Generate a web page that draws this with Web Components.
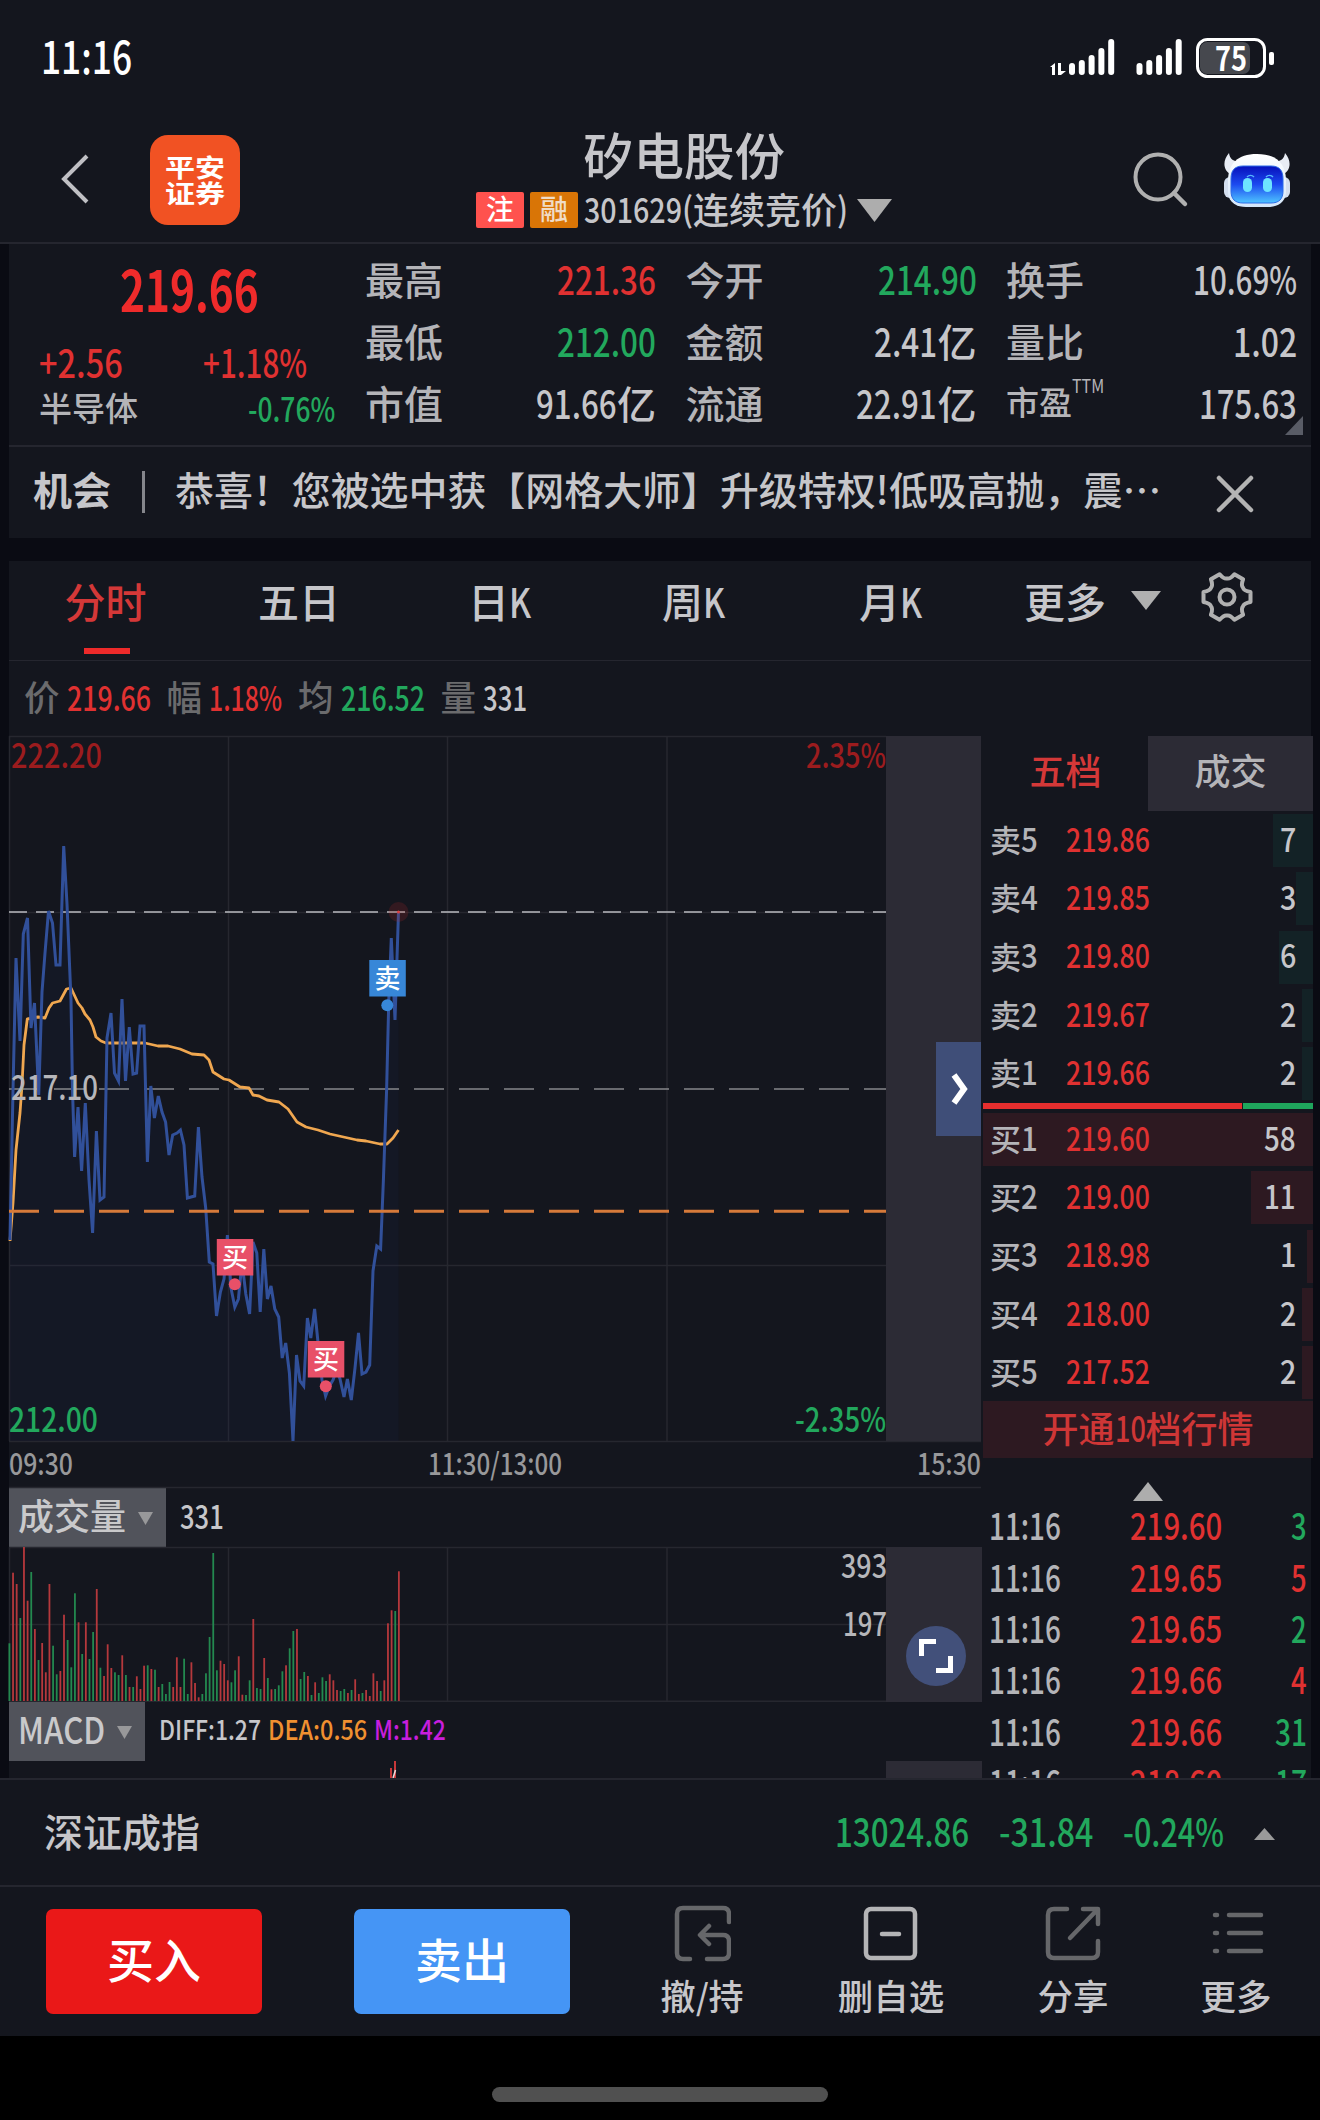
<!DOCTYPE html>
<html lang="zh-CN">
<head>
<meta charset="UTF-8">
<title>矽电股份 301629</title>
<style>
  body {
    margin: 0;
    background: #0a0b13;
    color: #c6c6ca;
    font-family: "Noto Sans CJK SC", sans-serif;
    font-weight: 500;
    --red: #e03131;
    --green: #22a85d;
    --panel: #14161e;
    --line: #25262f;
    --muted: #b4b4b8;
  }
</style>
</head>
<body>
<stock-page></stock-page>

<script>
// Inline text with narrow figures: w is the final width in px, --size the font size
class FitText extends HTMLElement {
  connectedCallback() {
    if (!this.shadowRoot) {
      this.attachShadow({ mode: 'open' });
      this.shadowRoot.innerHTML = `
        <style>
          :host { display: inline-block; flex: none; white-space: nowrap; font-size: var(--size); line-height: var(--lh, 1.2); }
          span { display: inline-block; transform-origin: 0 50%; transform: translateY(-.06em); }
        </style>
        <span><slot></slot></span>
      `;
    }
    const w = Number(this.getAttribute('w'));
    if (!w) return;
    const span = this.shadowRoot.querySelector('span');
    const natural = span.offsetWidth;
    this.style.width = w + 'px';
    if (natural) span.style.transform = `translateY(-.06em) scaleX(${w / natural})`;
  }
}
customElements.define('fit-text', FitText);

const t = (text, size, w = '', css = '') =>
  `<fit-text w="${w}" style="--size:${size}px;${css}">${text}</fit-text>`;
const RED = 'color:var(--red);';
const GREEN = 'color:var(--green);';

class StatusBar extends HTMLElement {
  connectedCallback() {
    const bars = x => [64, 61, 56, 49, 40].map((y, i) =>
      `<rect x="${x + i * 9.8}" y="${y}" width="6" height="${76 - y}" rx="3"/>`).join('');
    this.attachShadow({ mode: 'open' });
    this.shadowRoot.innerHTML = `
      <style>
        :host { display: flex; justify-content: space-between; align-items: center; height: 116px; padding: 0 44px 0 41px; color: #fff; background: var(--panel); }
        svg { display: block; font-family: inherit; }
      </style>
      ${t('11:16', 45, 91, 'font-weight:500')}
      <svg width="228" height="50" viewBox="1048 34 228 50" fill="#fff">
        <path d="M1050 68l5-4v12h-3v-8zM1058 64h3v8h5l-5 4h-3z"/>
        ${bars(1069)}${bars(1136.5)}
        <rect x="1200" y="43" width="50" height="32" rx="7" fill="#46484e"/>
        <rect x="1197.5" y="40.5" width="67" height="37" rx="10" fill="none" stroke="#fff" stroke-width="3"/>
        <rect x="1269" y="53" width="5" height="13" rx="2"/>
        <text x="1215" y="72" font-size="34" font-weight="700" textLength="32" lengthAdjust="spacingAndGlyphs">75</text>
      </svg>
    `;
  }
}
customElements.define('status-bar', StatusBar);

class StockHeader extends HTMLElement {
  connectedCallback() {
    this.attachShadow({ mode: 'open' });
    this.shadowRoot.innerHTML = `
      <style>
        :host { display: grid; grid-template-columns: 476px 1fr 187px; height: 126px; background: var(--panel); border-bottom: 2px solid var(--line); }
        .left, .right { display: flex; align-items: flex-start; }
        svg { display: block; }
        .back { margin: 38px 0 0 60px; }
        .logo { --lh: 26px; box-sizing: border-box; width: 90px; height: 90px; margin: 19px 0 0 60px; padding-top: 20px; border-radius: 18px; background: #f15223; color: #fff; display: flex; flex-direction: column; align-items: center; font-weight: 700; }
        .name { --lh: 1; display: flex; padding: 15px 0 0 107px; height: 52px; }
        .sub { --lh: 1; display: flex; align-items: center; height: 36px; margin-top: 9px; }
        .tag { display: flex; align-items: center; justify-content: center; width: 48px; height: 36px; border-radius: 2px; background: #ff524e; color: #fff; margin-right: 6px; }
        .tag.margin { background: #d97506; color: #f0dcc6; }
        .caret { margin: 0 0 0 9px; }
        .search { margin: 36px 0 0 0; }
        .bot { margin: 37px 0 0 34px; }
      </style>
      <div class="left">
        <svg class="back" width="30" height="50" viewBox="0 0 30 50" fill="none" stroke="#c0c0c4" stroke-width="4"><path d="M27 2L4 25l23 23"/></svg>
        <div class="logo">${t('平安', 25.5, 60)}${t('证券', 25.5, 60)}</div>
      </div>
      <div>
        <div class="name">${t('矽电股份', 50.5)}</div>
        <div class="sub">
          <span class="tag">${t('注', 28)}</span><span class="tag margin">${t('融', 28)}</span>
          ${t('301629', 34.5, 98)}${t('(', 34, 11)}${t('连续竞价', 36)}${t(')', 34, 11)}
          <svg class="caret" width="35" height="23"><path d="M0 0h35L17.5 23z" fill="#adadad"/></svg>
        </div>
      </div>
      <div class="right">
        <svg class="search" width="57" height="56" viewBox="1133 152 57 56" fill="none" stroke="#b0b0b0" stroke-width="4"><circle cx="1158" cy="177" r="22.5"/><path d="M1174 193l11 11" stroke-width="4.5" stroke-linecap="round"/></svg>
        <svg class="bot" width="68" height="56" viewBox="1 1 68 56">
          <defs>
            <linearGradient id="face" x1="0" y1="0" x2="0" y2="1"><stop offset="0" stop-color="#0610ba"/><stop offset=".5" stop-color="#1c4af0"/><stop offset="1" stop-color="#4ec4ff"/></linearGradient>
            <linearGradient id="shell" x1="0" y1="0" x2="0" y2="1"><stop offset="0" stop-color="#fff"/><stop offset="1" stop-color="#d4e6fa"/></linearGradient>
          </defs>
          <path d="M6 1C-1 9 0 19 9 23L21 9C12 11 7 8 6 1zM62 1c7 8 6 18-3 22L47 9c9 2 14-1 15-8z" fill="#e8ecf4"/>
          <rect x="1" y="25" width="12" height="21" rx="6" fill="#d3deef"/><rect x="55" y="25" width="12" height="21" rx="6" fill="#d3deef"/>
          <path d="M34 2c20 0 28 10 29 25v14c-1 10-9 14-18 14H23C14 55 6 51 5 41V27C6 12 14 2 34 2z" fill="url(#shell)"/>
          <path d="M20 14h28c9 0 12 5 12 13v12c0 8-4 12-12 12H20c-8 0-12-4-12-12V27c0-8 3-13 12-13z" fill="url(#face)" stroke="#2a6be8"/>
          <rect x="20" y="26" width="9" height="14" rx="4.5" fill="#6de4ff"/><rect x="40" y="26" width="9" height="14" rx="4.5" fill="#6de4ff"/>
          <path d="M24 25c2-2 5-2 7 0M43 25c2-2 5-2 7 0" fill="none" stroke="#55b8ff" stroke-width="1.5"/>
        </svg>
      </div>
    `;
  }
}
customElements.define('stock-header', StockHeader);

class QuotePanel extends HTMLElement {
  connectedCallback() {
    const yi = (num, w) => t(num, 39, w) + t('亿', 39);
    const rows = [
      ['最高', t('221.36', 39, 99, RED)], ['今开', t('214.90', 39, 99, GREEN)], ['换手', t('10.69%', 39, 104)],
      ['最低', t('212.00', 39, 99, GREEN)], ['金额', yi('2.41', 63)], ['量比', t('1.02', 39, 64)],
      ['市值', yi('91.66', 81)], ['流通', yi('22.91', 81)], ['', t('175.63', 39, 98)]
    ];
    this.attachShadow({ mode: 'open' });
    this.shadowRoot.innerHTML = `
      <style>
        :host { position: relative; display: grid; grid-template-columns: 356px 1fr; height: 201px; background: var(--panel); border-bottom: 2px solid var(--line); }
        .main { display: grid; grid-template-rows: 92px 54px 40px; }
        .main > div { display: flex; align-items: center; }
        .price { justify-content: center; padding-left: 5px; }
        .change { padding-left: 30px; gap: 80px; }
        .sector { padding: 0 30px 0 30px; justify-content: space-between; color: var(--muted); }
        .stats { display: grid; grid-template-columns: repeat(3, 291px); grid-template-rows: repeat(3, 62px); column-gap: 29.5px; padding-top: 5px; }
        .cell { display: flex; align-items: center; justify-content: space-between; }
        .cell b { font-weight: inherit; display: flex; color: var(--muted); }
        .cell i { font-style: normal; display: flex; }
        .ttm { margin-top: -9px; font-weight: 400; }
        .corner { position: absolute; right: 8px; bottom: 10px; }
      </style>
      <div class="main">
        <div class="price">${t('219.66', 57, 139, 'color:#ef2b2b;font-weight:700')}</div>
        <div class="change">${t('+2.56', 39, 84, RED)}${t('+1.18%', 39, 104, RED)}</div>
        <div class="sector">${t('半导体', 33)}${t('-0.76%', 34, 87, GREEN)}</div>
      </div>
      <div class="stats">
        ${rows.map(([label, value]) => `
          <div class="cell"><b>${label ? t(label, 39) : t('市盈', 33) + `<span class="ttm">${t('TTM', 19, 32)}</span>`}</b><i>${value}</i></div>`).join('')}
      </div>
      <svg class="corner" width="18" height="19"><path d="M18 0v19H0z" fill="#595c66"/></svg>
    `;
  }
}
customElements.define('quote-panel', QuotePanel);

class NoticeBar extends HTMLElement {
  connectedCallback() {
    this.attachShadow({ mode: 'open' });
    this.shadowRoot.innerHTML = `
      <style>
        :host { display: flex; align-items: center; box-sizing: border-box; height: 91px; padding: 0 0 5px 24px; background: var(--panel); }
        i { width: 3px; height: 42px; margin: 3px 30px 0 31px; background: #85868c; }
        svg { margin: 7px 0 0 55px; }
      </style>
      ${t('机会', 39, '', 'font-weight:700')}
      <i></i>
      <slot></slot>
      <svg width="38" height="38" stroke="#b4b4b4" stroke-width="4.5" stroke-linecap="round"><path d="M3 3l32 32M35 3L3 35"/></svg>
    `;
  }
}
customElements.define('notice-bar', NoticeBar);

class PeriodTabs extends HTMLElement {
  connectedCallback() {
    let gear = '';
    for (let k = 0; k < 6; k++) {
      const pt = (deg, r) => {
        const a = deg * Math.PI / 180;
        return (26 + r * Math.cos(a)).toFixed(1) + ' ' + (26 + r * Math.sin(a)).toFixed(1);
      };
      const c = k * 60;
      gear += `${k ? 'L' : 'M'}${pt(c - 12, 24)}L${pt(c + 12, 24)}Q${pt(c + 20, 18)} ${pt(c + 30, 18.5)}Q${pt(c + 40, 18)} ${pt(c + 48, 24)}`;
    }
    const k = t('K', 41, 22);
    this.attachShadow({ mode: 'open' });
    this.shadowRoot.innerHTML = `
      <style>
        :host { display: grid; grid-template-columns: 193px 194px 207px 181px 213px 1fr; height: 99px; background: var(--panel); border-bottom: 1px solid var(--line); }
        div { display: flex; align-items: center; justify-content: center; padding-bottom: 15px; }
        .on { position: relative; color: #d43838; }
        .on::after { content: ""; position: absolute; left: 75px; bottom: 6px; width: 46px; height: 6px; background: #ee2a2a; }
        .more { justify-content: flex-start; padding-left: 27px; }
        .caret { margin-left: 25px; margin-bottom: 5px; }
        .gear { margin-left: 40px; margin-bottom: 12px; }
      </style>
      <div class="on">${t('分时', 41)}</div>
      <div>${t('五日', 41)}</div>
      <div>${t('日', 41)}${k}</div>
      <div>${t('周', 41)}${k}</div>
      <div>${t('月', 41)}${k}</div>
      <div class="more">
        ${t('更多', 41)}
        <svg class="caret" width="30" height="19"><path d="M0 0h30L15 19z" fill="#b0b0b0"/></svg>
        <svg class="gear" width="52" height="52" fill="none" stroke="#b0b0b0" stroke-width="4" stroke-linejoin="round"><path d="${gear}z"/><circle cx="26" cy="26" r="7.5"/></svg>
      </div>
    `;
  }
}
customElements.define('period-tabs', PeriodTabs);

class MetricRow extends HTMLElement {
  connectedCallback() {
    const grey = 'color:#6b6b6d;';
    this.attachShadow({ mode: 'open' });
    this.shadowRoot.innerHTML = `
      <style>
        :host { display: flex; align-items: center; box-sizing: border-box; height: 75px; padding-left: 15px; background: var(--panel); }
        span { display: flex; align-items: center; gap: 7px; margin-right: 16px; }
        fit-text + fit-text { margin-top: 2px; }
      </style>
      <span>${t('价', 35.5, '', grey)}${t('219.66', 34, 84, RED)}</span>
      <span>${t('幅', 35.5, '', grey)}${t('1.18%', 34, 73, RED)}</span>
      <span>${t('均', 35.5, '', grey)}${t('216.52', 34, 84, GREEN)}</span>
      <span>${t('量', 35.5, '', grey)}${t('331', 34, 44)}</span>
    `;
  }
}
customElements.define('metric-row', MetricRow);

const PRICE = [
  10,1240, 13,1090, 16,958, 20,1041, 23.3,934, 27.5,918, 31,1028, 34.5,1003, 38.7,1095, 42,992, 45,953, 48.5,911, 52.5,923, 56,965, 60,965,
  63.7,846, 67,904, 71,1000, 72.5,1090, 74.6,1157, 78,1107, 81.6,1171, 85.3,1103, 89,1180, 92.6,1233, 96.4,1131, 100,1200, 104,1197,
  107,1038, 111,1013, 114.5,1073, 118.5,1081, 122,999, 125.5,1081, 129.3,1027, 133,1074, 136.6,1073, 140,1026, 144,1026, 147.4,1162,
  150.8,1086, 154.4,1118, 158.3,1096, 162,1112, 165.6,1122, 169,1155, 172.7,1135, 177,1133, 180.4,1130, 184,1145, 187.4,1198, 191,1197,
  194.7,1196, 198.4,1127, 202,1177, 205.7,1208, 209.3,1262, 213,1264, 216.5,1316, 220.4,1292, 224,1279, 227.4,1235, 231,1288, 234.8,1307,
  238.4,1299, 242,1262, 245.8,1294, 249.6,1314, 253,1242, 256.8,1253, 260.2,1312, 263.8,1249, 267.4,1299, 271,1286, 274.8,1309, 278.7,1317,
  282.2,1358, 285.7,1343, 289.4,1373, 293,1441, 296.5,1355, 300,1381, 303.7,1386, 307.4,1318, 310.8,1338, 314.6,1309, 318.3,1345, 322,1380,
  325.6,1396, 329.4,1386, 333,1380, 336.5,1370, 340,1379, 344,1397, 347.4,1379, 351.3,1400, 355,1368, 358.5,1333, 362,1374, 366,1372,
  369.7,1365, 373,1271, 376.8,1246, 380.6,1249, 383.4,1180, 386.6,1090, 388.8,1000, 391.3,938, 395,1020, 398.5,912
];
const AVERAGE = [
  10,1241, 13,1203, 16,1150, 20,1113, 22,1085, 24,1045, 27.3,1019, 38,1017, 45,1018, 49,1008, 52.5,1003, 60,1001, 66.5,989, 71,988, 78,1003,
  82,1008, 85,1014, 90,1020, 93,1027, 96,1037, 101,1041, 106,1043, 145,1043, 158,1046, 168,1046, 180,1049, 192,1054, 204,1055, 209,1060,
  213,1072, 224,1079, 229,1080, 240,1087, 249,1088, 253,1095, 259,1096, 267,1100, 279,1102, 288,1109, 297,1122, 306,1127, 318,1130,
  330,1134, 357,1140, 366,1141, 380,1144, 387,1144, 393,1138, 398.5,1130
];

const label = (text, x, y, size, w, fill, anchor = 'start') =>
  `<text x="${x}" y="${y}" font-size="${size}" textLength="${w}" lengthAdjust="spacingAndGlyphs" text-anchor="${anchor}" fill="${fill}">${text}</text>`;

class PriceChart extends HTMLElement {
  connectedCallback() {
    const marker = (x, y, text, color) => `
      <rect x="${x}" y="${y}" width="36.5" height="36.5" fill="${color}"/>
      <circle cx="${x + 18}" cy="${y + 45.2}" r="6" fill="${color}"/>
      <text x="${x + 18.2}" y="${y + 28}" font-size="26" text-anchor="middle" fill="#fff">${text}</text>`;
    this.attachShadow({ mode: 'open' });
    this.shadowRoot.innerHTML = `
      <style>
        :host { display: block; position: relative; height: 751px; }
        svg { display: block; overflow: visible; font-family: inherit; }
        button { position: absolute; right: 2px; top: 306px; width: 45px; height: 94px; padding: 0 0 0 2px; border: 0; background: #3f4e78; display: grid; place-items: center; }
      </style>
      <svg width="974" height="751" viewBox="9 736 974 751">
        <path d="M9 736.5H886M228.5 736V1441M447.5 736V1441M667 736V1441M9.5 736V1441M9 912.5H886M9 1265.5H886M9 1441.5H981M9 1487.5H981" stroke="#26272f" stroke-width="1.5" fill="none"/>
        <rect x="886" y="736" width="95" height="705" fill="#2c2b35"/>
        <polygon points="${PRICE.join(' ')} 398.5,1441 10,1441" fill="#1a2c58" opacity=".12"/>
        <path d="M9 912H886" stroke="#b9bac0" stroke-width="1.6" stroke-dasharray="18 9"/>
        <path d="M9 1089H886" stroke="#85868b" stroke-width="1.6" stroke-dasharray="30 15"/>
        <polyline points="${AVERAGE.join(' ')}" fill="none" stroke="#f0a750" stroke-width="2.8" stroke-linejoin="round"/>
        <polyline points="${PRICE.join(' ')}" fill="none" stroke="#31509a" stroke-width="3"/>
        <path d="M9 1211.3H886" stroke="#d67a3a" stroke-width="3" stroke-dasharray="30 15"/>
        <circle cx="398.5" cy="912" r="10" fill="#b02828" opacity=".2"/>
        <circle cx="398.5" cy="912" r="1.5" fill="#e04040"/>
        ${marker(369.3, 960, '卖', '#3787d8')}
        ${marker(216.8, 1239, '买', '#e85068')}
        ${marker(307.8, 1341, '买', '#e85068')}
        ${label('222.20', 11, 768, 34, 91, '#9c1c1e')}
        ${label('2.35%', 886, 768, 34, 80, '#9c1c1e', 'end')}
        ${label('217.10', 11, 1100, 34, 87, '#b6b6ba')}
        ${label('212.00', 9, 1432, 34, 89, '#22a85d')}
        ${label('-2.35%', 886, 1432, 34, 91, '#22a85d', 'end')}
        ${label('09:30', 9, 1475, 30, 64, '#98989a')}
        ${label('11:30/13:00', 428, 1475, 30, 134, '#98989a')}
        ${label('15:30', 981, 1475, 30, 64, '#98989a', 'end')}
      </svg>
      <button aria-label="收起盘口">
        <svg width="18" height="34" fill="none" stroke="#fff" stroke-width="6"><path d="M3 3l10 14L3 31"/></svg>
      </button>
    `;
  }
}
customElements.define('price-chart', PriceChart);

// Name button of an indicator pane, with its readings in the slot
class IndicatorHead extends HTMLElement {
  connectedCallback() {
    this.attachShadow({ mode: 'open' });
    this.shadowRoot.innerHTML = `
      <style>
        :host { display: flex; align-items: center; height: 59px; }
        button { display: flex; align-items: center; box-sizing: border-box; height: 59px; padding: 0 13px 2px 9px; border: 0; margin-right: 14px; background: #51535b; color: #c9c9cb; font: inherit; gap: 12px; }
        svg { margin-top: 4px; }
        slot:not([name])::slotted(*) { margin-right: 7px; }
      </style>
      <button><slot name="name"></slot><svg width="15" height="13"><path d="M0 0h15L7.5 13z" fill="#98989a"/></svg></button>
      <slot></slot>
    `;
  }
}
customElements.define('indicator-head', IndicatorHead);

const VOLUME = '490g 278r 312r 414g 201r 362r 276g 447r 540g 489r 577r 312r 497g 583g 573r 404r 480g 562g 340g 427r 522g 427r 537g 456g 327r 563g 588r 493r 564r 577g 585g 526r 585g 621r 621g 589r 627r 557r 556g 567r 569g 621r 612g 642g 606g 621r 532r 621r 536g 642g 547r 609r 652r 642g 580g 471g 219g 571g 542r 552r 601r 607g 571g 529r 644r 645g 601g 417r 624g 627g 534r 594g 628r 627g 616g 574g 556r 505g 453g 447r 597g 576g 588r 645g 607r 639g 592g 603g 583r 601r 630r 633g 627g 639r 630g 598r 642r 639g 630r 648r 580r 603r 633g 601r 430r 391r 393g 274r'.split(' ');

class VolumeChart extends HTMLElement {
  connectedCallback() {
    const bars = VOLUME.map((v, i) => {
      const h = (663 - parseInt(v, 10)) / 3;
      return `<rect x="${(8.5 + i * 3.64).toFixed(2)}" y="${(1701 - h).toFixed(1)}" width="1.8" height="${h.toFixed(1)}" fill="${v.endsWith('r') ? '#b5383c' : '#23894f'}"/>`;
    }).join('');
    this.attachShadow({ mode: 'open' });
    this.shadowRoot.innerHTML = `
      <style>
        :host { display: block; height: 155px; }
        svg { display: block; overflow: visible; font-family: inherit; }
      </style>
      <svg width="974" height="155" viewBox="9 1547 974 155">
        <path d="M9 1547.5H886M9 1624.5H886M9 1701.3H981M9.5 1547V1701M228.5 1547V1701M447.5 1547V1701M667 1547V1701" stroke="#26272f" stroke-width="1.5"/>
        <rect x="886" y="1547" width="96" height="155" fill="#2c2b35"/>
        ${bars}
        ${label('393', 887, 1578, 32, 46, '#b6b6ba', 'end')}
        ${label('197', 887, 1636, 32, 44, '#b6b6ba', 'end')}
        <circle cx="936" cy="1656" r="30" fill="#42507a"/>
        <path d="M921.5 1656v-14.500H936M950.5 1656v14.500H936" fill="none" stroke="#fff" stroke-width="5"/>
      </svg>
    `;
  }
}
customElements.define('volume-chart', VolumeChart);

class MacdChart extends HTMLElement {
  connectedCallback() {
    this.attachShadow({ mode: 'open' });
    this.shadowRoot.innerHTML = `
      <style>:host { display: block; height: 17px; } svg { display: block; }</style>
      <svg width="974" height="17" viewBox="9 1761 974 17">
        <rect x="886" y="1761" width="96" height="17" fill="#2c2b35"/>
        <path d="M391 1768v10M395 1761v17" stroke="#c8383a" stroke-width="2"/>
        <path d="M393 1778l2.5-8" stroke="#ecdcdc" stroke-width="1.5"/>
      </svg>
    `;
  }
}
customElements.define('macd-chart', MacdChart);

class OrderBook extends HTMLElement {
  connectedCallback() {
    const row = ([side, n, price, vol, bar]) => `
      <div class="row ${side === '买' ? 'buy' : 'sell'}" style="--bar:${bar}px">
        <span class="lv">${t(side, 31)}${t(n, 33, 17)}</span>
        ${t(price, 33, 84, RED)}
        <span class="vol">${t(vol, 33, vol.length * 15.5 + 1)}</span>
      </div>`;
    const sells = [['卖', 5, '219.86', '7', 40], ['卖', 4, '219.85', '3', 17], ['卖', 3, '219.80', '6', 34], ['卖', 2, '219.67', '2', 11], ['卖', 1, '219.66', '2', 11]];
    const buys = [['买', 1, '219.60', '58', 330], ['买', 2, '219.00', '11', 62], ['买', 3, '218.98', '1', 6], ['买', 4, '218.00', '2', 11], ['买', 5, '217.52', '2', 11]];
    this.attachShadow({ mode: 'open' });
    this.shadowRoot.innerHTML = `
      <style>
        :host { display: block; background: var(--panel); }
        .tabs { display: grid; grid-template-columns: 1fr 165px; height: 75px; color: #d43838; }
        .tabs div { display: flex; align-items: center; justify-content: center; padding-bottom: 4px; }
        .tabs .off { background: #2c2b35; color: var(--muted); }
        .rows { display: flex; flex-direction: column; gap: 5.3px; padding: 3px 0; }
        .row { display: grid; grid-template-columns: 83px 100px 1fr; align-items: center; box-sizing: border-box; height: 53px; padding-right: 17px;
          background: linear-gradient(var(--tint), var(--tint)) right / var(--bar) 100% no-repeat; }
        .sell { --tint: #132226; }
        .buy { --tint: #2d1921; }
        .lv { display: flex; align-items: center; padding-left: 7px; color: var(--muted); }
        .vol { display: flex; justify-content: flex-end; }
        .ratio { display: grid; grid-template-columns: 259px 1fr; gap: 1px; height: 6px; margin-bottom: 1px; }
        .ratio i { background: #e62e2e; }
        .ratio i + i { background: #1fa55c; }
        .cta { display: flex; align-items: center; justify-content: center; box-sizing: border-box; height: 57px; margin-top: -1px; padding-bottom: 1px; background: #2d1921; color: #cf3636; }
      </style>
      <div class="tabs"><div>${t('五档', 36)}</div><div class="off">${t('成交', 36)}</div></div>
      <div class="rows">${sells.map(row).join('')}</div>
      <div class="ratio"><i></i><i></i></div>
      <div class="rows">${buys.map(row).join('')}</div>
      <div class="cta">${t('开通', 36)}${t('10', 35, 31)}${t('档行情', 36)}</div>
    `;
  }
}
customElements.define('order-book', OrderBook);

class TickList extends HTMLElement {
  connectedCallback() {
    const ticks = [['219.60', '3', GREEN], ['219.65', '5', RED], ['219.65', '2', GREEN], ['219.66', '4', RED], ['219.66', '31', GREEN], ['218.60', '17', GREEN]];
    this.attachShadow({ mode: 'open' });
    this.shadowRoot.innerHTML = `
      <style>
        :host { display: block; background: var(--panel); height: 320px; overflow: hidden; width: 328px; }
        .up { display: block; margin: 24px 0 0 150px; }
        .row { display: grid; grid-template-columns: 141px 120px 1fr; align-items: center; height: 51.3px; padding: 0 4px 0 6px; color: var(--muted); }
        .row fit-text:last-child { justify-self: end; }
      </style>
      <svg class="up" width="30" height="19"><path d="M0 19h30L15 0z" fill="#adadad"/></svg>
      ${ticks.map(([price, vol, color]) => `
        <div class="row">${t('11:16', 36, 72)}${t(price, 36, 92, RED)}${t(vol, 36, vol.length * 16, color)}</div>`).join('')}
    `;
  }
}
customElements.define('tick-list', TickList);

class IndexBar extends HTMLElement {
  connectedCallback() {
    this.attachShadow({ mode: 'open' });
    this.shadowRoot.innerHTML = `
      <style>
        :host { display: flex; align-items: center; box-sizing: border-box; height: 109px; padding: 0 45px 1px 44px; background: var(--panel); border: solid var(--line); border-width: 2px 0; }
        .nums { display: flex; margin-left: auto; gap: 30px; align-items: center; color: var(--green); }
        svg { margin-top: 4px; }
      </style>
      ${t('深证成指', 39)}
      <div class="nums">
        ${t('13024.86', 39, 134)}${t('-31.84', 39, 94)}${t('-0.24%', 39, 101)}
        <svg width="21" height="12"><path d="M0 12h21L10.5 0z" fill="#9a9a9a"/></svg>
      </div>
    `;
  }
}
customElements.define('index-bar', IndexBar);

class TradeBar extends HTMLElement {
  connectedCallback() {
    this.attachShadow({ mode: 'open' });
    this.shadowRoot.innerHTML = `
      <style>
        :host { display: flex; height: 149px; padding-left: 46px; background: var(--panel); }
        button { width: 216px; height: 105px; margin: 22px 92px 0 0; padding: 0; border: 0; border-radius: 7px; color: #fff; font: inherit; background: #ea1818; }
        .sell { background: #4595f5; margin-right: 36px; }
        .item { display: flex; flex-direction: column; align-items: center; padding-top: 18px; }
        .item svg { display: block; margin-bottom: 13px; }
        .item span { display: flex; }
        svg { fill: none; stroke: #66676a; stroke-width: 4.5; stroke-linecap: round; stroke-linejoin: round; }
      </style>
      <button>${t('买入', 47)}</button>
      <button class="sell">${t('卖出', 47)}</button>
      <div class="item" style="width:192px">
        <svg width="58" height="58" viewBox="-1 0 58 58"><path d="M55 17V9q0-6-6-6H9Q3 3 3 9v39q0 6 6 6h7M33 54h16q6 0 6-6V36q0-6-6-6H27M35 21l-9 9 9 9"/></svg>
        <span>${t('撤', 35)}${t('/', 35, 13)}${t('持', 35)}</span>
      </div>
      <div class="item" style="width:186px">
        <svg width="58" height="58" style="stroke:#b4b4b6"><rect x="4" y="4" width="49" height="49" rx="5"/><path d="M20 29h17"/></svg>
        ${t('删自选', 35.5)}
      </div>
      <div class="item" style="width:178px">
        <svg width="58" height="58"><path d="M23 4H10q-6 0-6 6v37q0 6 6 6h38q6 0 6-6V36M39 4h15v15M53 5L26 33"/></svg>
        ${t('分享', 35.5)}
      </div>
      <div class="item" style="width:148px">
        <svg width="58" height="58" viewBox="-1 1 58 58"><path d="M7 11h2M21 11h32M7 29h2M21 29h32M7 47h2M21 47h32"/></svg>
        ${t('更多', 35.5)}
      </div>
    `;
  }
}
customElements.define('trade-bar', TradeBar);

class HomeIndicator extends HTMLElement {
  connectedCallback() {
    this.attachShadow({ mode: 'open' });
    this.shadowRoot.innerHTML = `
      <style>
        :host { display: flex; justify-content: center; height: 84px; background: #000; }
        i { width: 336px; height: 15px; margin-top: 51px; border-radius: 8px; background: #505050; }
      </style>
      <i></i>
    `;
  }
}
customElements.define('home-indicator', HomeIndicator);

class StockPage extends HTMLElement {
  connectedCallback() {
    this.attachShadow({ mode: 'open' });
    this.shadowRoot.innerHTML = `
      <style>
        :host { display: block; width: 1320px; height: 2120px; overflow: hidden; }
        main { margin: 0 9px; height: 1534px; }
        period-tabs { margin-top: 23px; }
        .board { display: grid; grid-template-columns: 974px 330px; height: 1042px; background: linear-gradient(var(--panel), var(--panel)) 0 0 / 1302px 100% no-repeat; }
        .volume { margin-top: 1px; }
      </style>
      <status-bar></status-bar>
      <stock-header></stock-header>
      <main>
        <quote-panel></quote-panel>
        <notice-bar>${t('恭喜！您被选中获【网格大师】升级特权!低吸高抛，震…', 39, 986)}</notice-bar>
        <period-tabs></period-tabs>
        <metric-row></metric-row>
        <div class="board">
          <div>
            <price-chart></price-chart>
            <indicator-head class="volume"><span slot="name">${t('成交量', 36)}</span>${t('331', 32, 44)}</indicator-head>
            <volume-chart></volume-chart>
            <indicator-head>
              <span slot="name">${t('MACD', 36, 87)}</span>
              ${t('DIFF:1.27', 27, 102)}${t('DEA:0.56', 27, 99, 'color:#f09030')}${t('M:1.42', 27, 72, 'color:#c81edc')}
            </indicator-head>
            <macd-chart></macd-chart>
          </div>
          <div>
            <order-book></order-book>
            <tick-list></tick-list>
          </div>
        </div>
      </main>
      <index-bar></index-bar>
      <trade-bar></trade-bar>
      <home-indicator></home-indicator>
    `;
  }
}
customElements.define('stock-page', StockPage);
</script>
</body>
</html>
